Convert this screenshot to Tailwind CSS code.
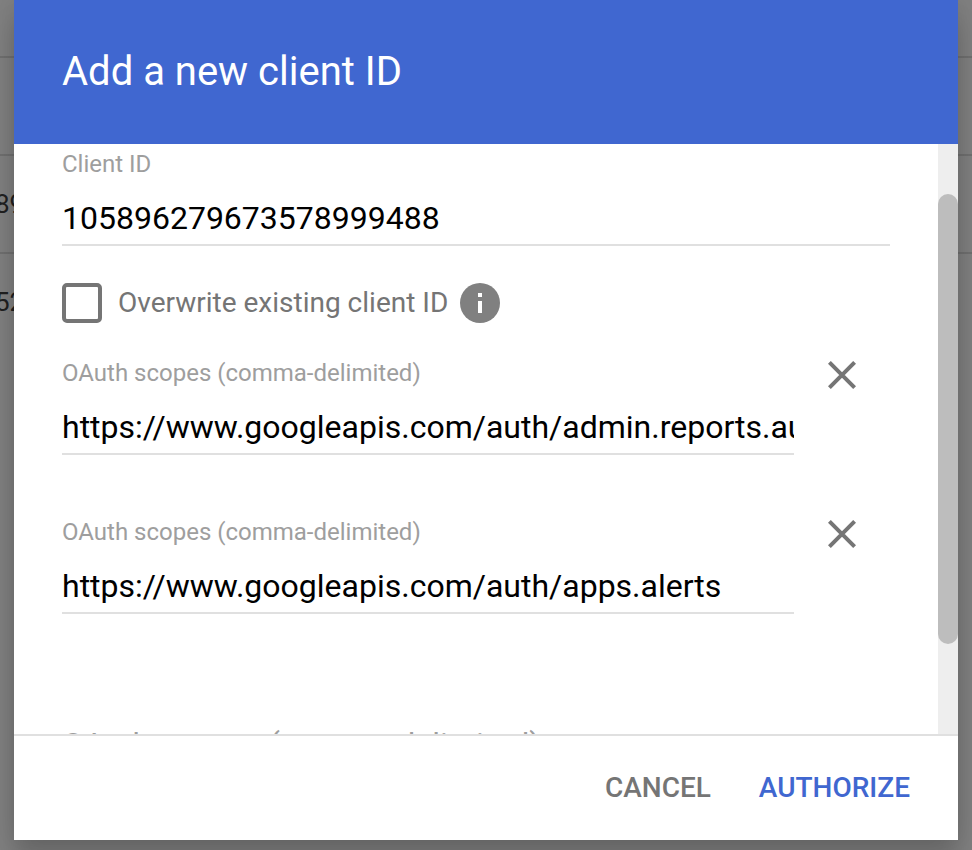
<!DOCTYPE html>
<html lang="en">
<head>
<meta charset="utf-8">
<title>Add a new client ID</title>
<script src="https://cdn.jsdelivr.net/npm/@tailwindcss/browser@4"></script>
</head>
<body class="relative h-[850px] w-[972px] overflow-hidden bg-[#808080] font-[Roboto,sans-serif]">
  <!-- dimmed page behind the dialog -->
  <div class="flex h-full flex-col text-[26px] leading-none text-[#202020]">
    <div class="h-[58px] border-b-2 border-[#707070]"></div>
    <div class="h-[98px] border-b-2 border-[#707070]"></div>
    <div class="flex h-[98px] items-center border-b-2 border-[#707070]"><span class="-ml-[5px]">89</span></div>
    <div class="flex h-[98px] items-center pb-[2px]"><span class="-ml-[5px]">52</span></div>
  </div>

  <div class="absolute top-0 left-[14px] flex h-[840px] w-[944px] flex-col bg-white shadow-[0_24px_24px_0_rgba(0,0,0,0.15),0_0_24px_0_rgba(0,0,0,0.12)]">
    <header class="flex h-[144px] shrink-0 items-center bg-[#4067d0] pl-12">
      <h1 class="text-[40px] leading-none text-white">Add a new client ID</h1>
    </header>

    <div class="flex h-[590px] shrink-0 overflow-hidden">
      <main class="w-[924px] shrink-0 pl-12">
        <div class="w-[828px]">
          <div class="pt-[6px] text-[24px] leading-[28px] text-[#9e9e9e]">Client ID</div>
          <div class="mt-[18px] h-[50px] border-b-2 border-[#e0e0e0] text-[32px] leading-[44px] text-black">105896279673578999488</div>
        </div>
        <div class="mt-[37px] flex h-10 items-center">
          <span class="size-10 rounded-[5px] border-4 border-[#757575]"></span>
          <span class="ml-4 text-[28px] leading-10 text-[#757575]">Overwrite existing client ID</span>
          <svg class="ml-3 size-10" viewBox="0 0 40 40"><circle cx="20" cy="20" r="20" fill="#808080"/><path d="M18 10h4v4h-4zM18 18h4v12h-4z" fill="#fff"/></svg>
        </div>
        <div class="mt-[36px] flex h-[96px]">
          <div class="w-[732px]">
            <div class="text-[24px] leading-[28px] text-[#9e9e9e]">OAuth scopes (comma-delimited)</div>
            <div class="mt-[18px] h-[50px] overflow-hidden border-b-2 border-[#e0e0e0] text-[32px] leading-[44px] whitespace-nowrap text-black">https://www.googleapis.com/auth/admin.reports.audit.readonly</div>
          </div>
          <svg class="mt-[2px] ml-[34px] size-7" viewBox="0 0 28 28"><path d="M1.4 1.4l25.2 25.2M26.6 1.4L1.4 26.6" stroke="#757575" stroke-width="4"/></svg>
        </div>
        <div class="mt-[63px] flex h-[96px]">
          <div class="w-[732px]">
            <div class="text-[24px] leading-[28px] text-[#9e9e9e]">OAuth scopes (comma-delimited)</div>
            <div class="mt-[18px] h-[50px] overflow-hidden border-b-2 border-[#e0e0e0] text-[32px] leading-[44px] whitespace-nowrap text-black">https://www.googleapis.com/auth/apps.alerts</div>
          </div>
          <svg class="mt-[2px] ml-[34px] size-7" viewBox="0 0 28 28"><path d="M1.4 1.4l25.2 25.2M26.6 1.4L1.4 26.6" stroke="#757575" stroke-width="4"/></svg>
        </div>
        <div class="mt-[110px] text-[32px] leading-[40px] text-[#9e9e9e]">OAuth scopes (comma-delimited)</div>
      </main>
      <div class="w-5 shrink-0 bg-[#eeeeee] pt-[50px]">
        <div class="h-[450px] rounded-full bg-[#bdbdbd]"></div>
      </div>
    </div>

    <footer class="flex h-[106px] shrink-0 items-center justify-end gap-12 border-t-2 border-[#e0e0e0] pr-12 text-[28px] leading-none font-medium">
      <button class="text-[#757575]">CANCEL</button>
      <button class="text-[#4067d0]">AUTHORIZE</button>
    </footer>
  </div>
</body>
</html>
